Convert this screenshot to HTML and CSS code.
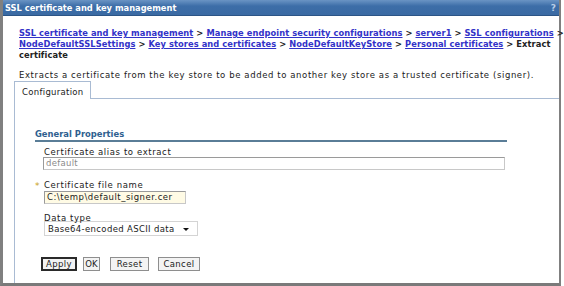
FILE: index.html
```html
<!DOCTYPE html>
<html>
<head>
<meta charset="utf-8">
<link rel="stylesheet" href="styles.css">
</head>
<body>
<div class="frame">
  <div class="titlebar">
    <span class="title">SSL certificate and key management</span>
    <span class="help">?</span>
  </div>
  <div class="content">
    <div class="crumbs">
      <a href="#">SSL certificate and key management</a> &gt; <a href="#">Manage endpoint security configurations</a> &gt; <a href="#">server1</a> &gt; <a href="#">SSL configurations</a> &gt;<br><a href="#">NodeDefaultSSLSettings</a> &gt; <a href="#">Key stores and certificates</a> &gt; <a href="#">NodeDefaultKeyStore</a> &gt; <a href="#">Personal certificates</a> &gt; Extract<br>certificate
    </div>
    <p class="desc">Extracts a certificate from the key store to be added to another key store as a trusted certificate (signer).</p>
    <div class="tabs">
      <div class="tab">Configuration</div>
      <div class="tab-rest"></div>
    </div>
    <div class="panel">
      <div class="section">
        <h3 class="heading">General Properties</h3>
        <div class="field">
          <label class="label">Certificate alias to extract</label>
          <div class="input alias">default</div>
        </div>
        <div class="field">
          <label class="label"><span class="req">*</span>Certificate file name</label>
          <div class="input file">C:\temp\default_signer.cer</div>
        </div>
        <div class="field">
          <label class="label">Data type</label>
          <div class="select"><span>Base64-encoded ASCII data</span><span class="arrow"></span></div>
        </div>
      </div>
      <div class="buttons">
        <span class="btn focus apply">Apply</span>
        <span class="btn ok">OK</span>
        <span class="btn reset">Reset</span>
        <span class="btn cancel">Cancel</span>
      </div>
    </div>
  </div>
</div>
</body>
</html>
```
FILE: styles.css
```css
html, body {
  margin: 0;
  padding: 0;
  background: #fff;
}
body {
  font-family: "DejaVu Sans", Verdana, sans-serif;
  font-size: 8.5px;
  color: #1a1a1a;
}
.frame {
  width: 556px;
  height: 283px;
  border-left: 3px solid #808080;
  border-right: 2px solid #808080;
  border-bottom: 3px solid #7a7a7a;
  display: flex;
  flex-direction: column;
}
.titlebar {
  height: 15px;
  background: linear-gradient(#6a94c4, #3d6ea8 40%, #3a6aa3);
  border-bottom: 1px solid #2c5586;
  display: flex;
  align-items: center;
  justify-content: space-between;
  padding: 0 3px 0 2px;
  color: #fff;
}
.title {
  font-weight: bold;
  font-size: 8.3px;
}
.help {
  font-weight: bold;
  font-size: 9px;
  color: #b8cde6;
}
.content {
  flex: 1;
  display: flex;
  flex-direction: column;
  padding-top: 12px;
}
.crumbs {
  padding-left: 16px;
  line-height: 11px;
  font-weight: bold;
  font-size: 8.3px;
  letter-spacing: 0.08px;
  color: #222;
  white-space: nowrap;
}
.crumbs a {
  color: #3232c8;
  text-decoration: underline;
}
.desc {
  margin: 9px 0 0 16px;
  line-height: 11px;
  letter-spacing: 0.6px;
}
.tabs {
  display: flex;
  height: 18px;
}
.tab {
  margin-left: 11px;
  width: 77px;
  border: 1px solid #a9bbd3;
  border-bottom: none;
  padding: 6px 0 0 7px;
  box-sizing: border-box;
  line-height: 9px;
  letter-spacing: 0.3px;
}
.tab-rest {
  flex: 1;
  border-bottom: 1px solid #a9bbd3;
}
.panel {
  flex: 1;
  margin-left: 11px;
  border-left: 1px solid #a9bbd3;
  display: flex;
  flex-direction: column;
}
.section {
  margin-left: 20px;
  width: 472px;
  padding-top: 30px;
}
.heading {
  margin: 0;
  font-size: 8.4px;
  line-height: 11px;
  font-weight: bold;
  color: #2f5f8f;
  border-bottom: 2px solid #5a7d97;
}
.field {
  margin-left: 9px;
  margin-top: 5px;
  display: flex;
  flex-direction: column;
  align-items: flex-start;
}
.field + .field {
  margin-top: 10px;
}
.field + .field + .field {
  margin-top: 9px;
}
.label {
  line-height: 10px;
  position: relative;
  letter-spacing: 0.6px;
}
.req {
  position: absolute;
  left: -9px;
  top: 1px;
  color: #c9a019;
  font-size: 9px;
}
.input {
  box-sizing: border-box;
  height: 13px;
  line-height: 11px;
  padding: 0 2px;
  border: 1px solid #9a9a9a;
  border-right-color: #c8c8c8;
  border-bottom-color: #c8c8c8;
}
.alias {
  margin-left: -1px;
  width: 462px;
  color: #8a8a8a;
  letter-spacing: 0.3px;
}
.file {
  margin-top: 1px;
  width: 142px;
  background: #fffbe5;
  letter-spacing: 0.5px;
}
.select {
  box-sizing: border-box;
  width: 154px;
  height: 15px;
  margin-top: -2px;
  border: 1px solid #d4d4d4;
  display: flex;
  align-items: center;
  justify-content: space-between;
  padding: 0 8px 0 3px;
  letter-spacing: 0.35px;
}
.arrow {
  width: 0;
  height: 0;
  border-left: 3px solid transparent;
  border-right: 3px solid transparent;
  border-top: 3px solid #111;
  margin-top: 1px;
}
.buttons {
  margin-left: 26px;
  margin-top: 21px;
  display: flex;
}
.btn {
  box-sizing: border-box;
  height: 14px;
  line-height: 12px;
  text-align: center;
  border: 1px solid #8e8e8e;
  background: #f3f3f3;
  letter-spacing: 0.4px;
}
.apply {
  width: 36px;
  margin-right: 6px;
}
.ok {
  width: 17px;
  margin-right: 10px;
  letter-spacing: 0;
}
.reset {
  width: 39px;
  margin-right: 9px;
}
.cancel {
  width: 42px;
}
.btn.focus {
  border: 2px solid #2a2a2a;
  line-height: 10px;
}
```
